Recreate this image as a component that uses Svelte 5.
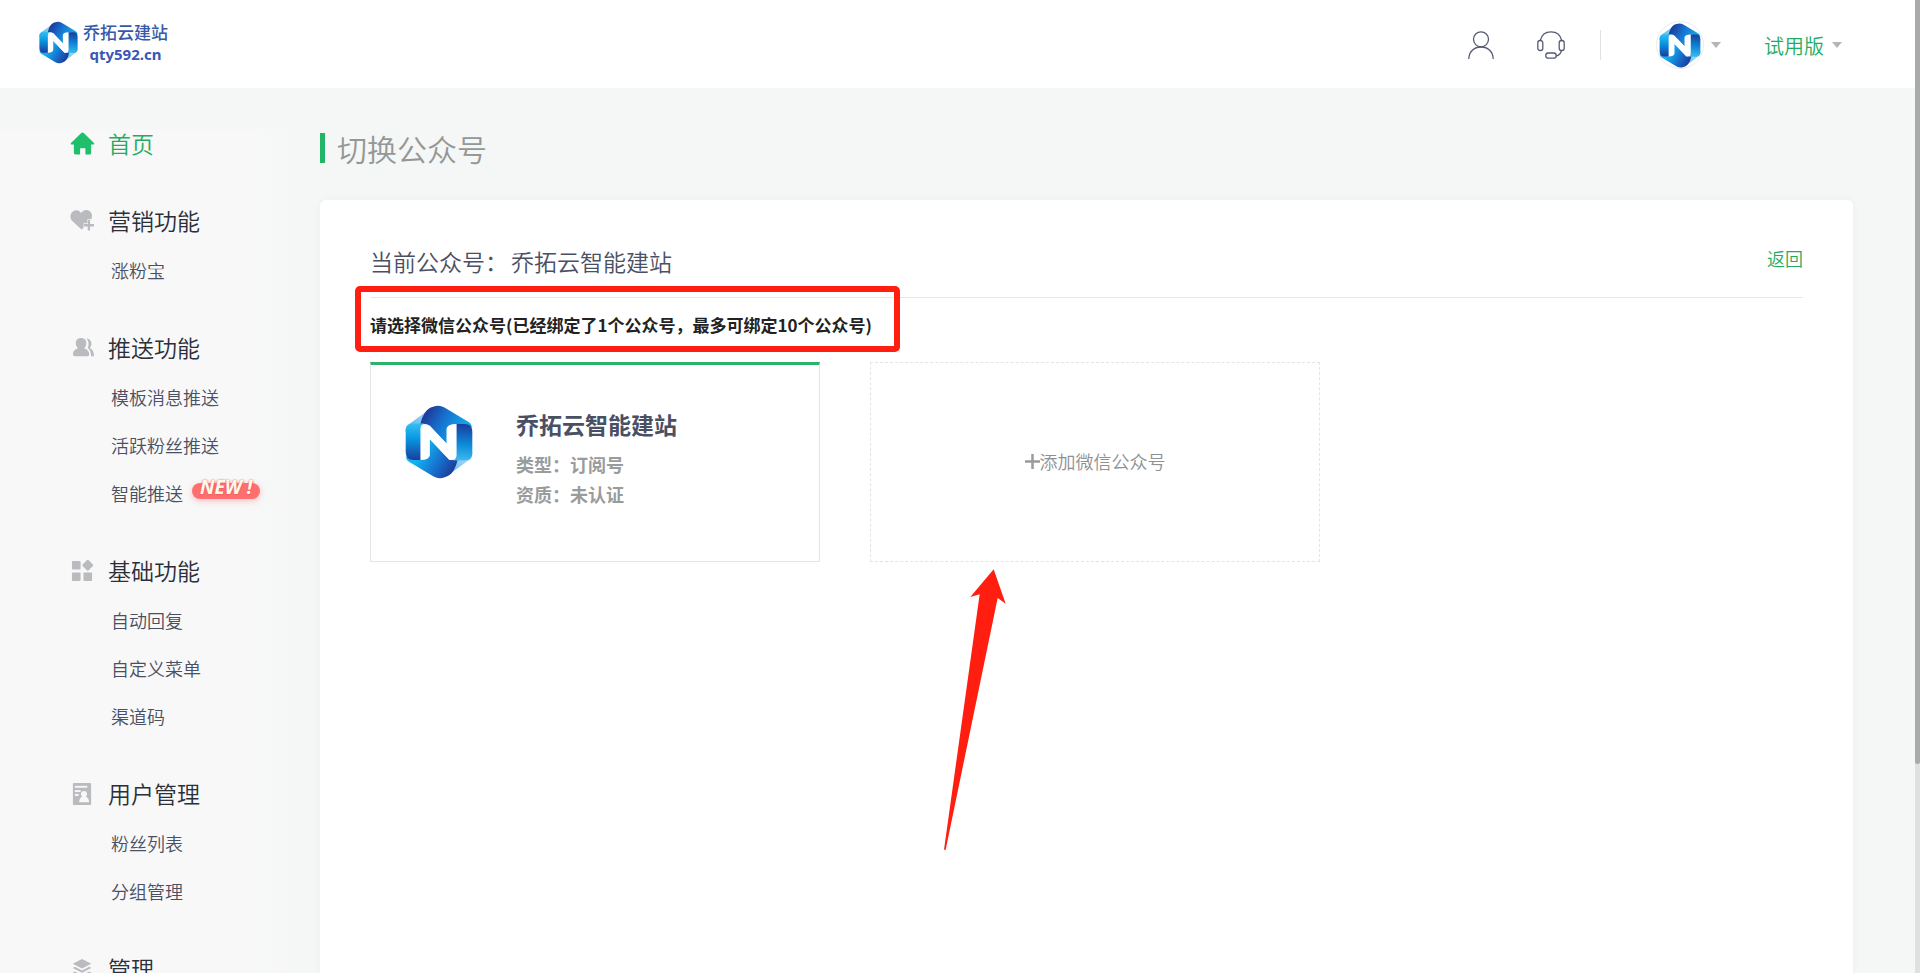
<script>
  const groups = [
    { title: '营销功能', icon: 'heart', items: [{ label: '涨粉宝' }] },
    {
      title: '推送功能',
      icon: 'people',
      items: [{ label: '模板消息推送' }, { label: '活跃粉丝推送' }, { label: '智能推送', isNew: true }]
    },
    {
      title: '基础功能',
      icon: 'blocks',
      items: [{ label: '自动回复' }, { label: '自定义菜单' }, { label: '渠道码' }]
    },
    { title: '用户管理', icon: 'profile', items: [{ label: '粉丝列表' }, { label: '分组管理' }] },
    { title: '管理', icon: 'layers', items: [] }
  ];
</script>

{#snippet mark(cls)}
  <svg class={cls} viewBox="30 30 207 224" aria-hidden="true"><use href="#brand-mark" /></svg>
{/snippet}

{#snippet caret()}
  <svg class="caret" viewBox="0 0 10 6" aria-hidden="true"><path d="M0 0h10L5 6z" fill="#b3b5b7" /></svg>
{/snippet}

<!-- Brand mark shared by the header, the avatar and the account card -->
<svg class="defs" aria-hidden="true">
  <defs>
    <linearGradient id="g-top" gradientUnits="userSpaceOnUse" x1="100" y1="50" x2="200" y2="110">
      <stop offset="0" stop-color="#1d3f9f" /><stop offset=".45" stop-color="#1672cf" /><stop offset="1" stop-color="#12a5e8" />
    </linearGradient>
    <linearGradient id="g-left" gradientUnits="userSpaceOnUse" x1="60" y1="85" x2="60" y2="198">
      <stop offset="0" stop-color="#35c0f3" /><stop offset=".4" stop-color="#0899e2" /><stop offset="1" stop-color="#1b3c9c" />
    </linearGradient>
    <linearGradient id="g-right" gradientUnits="userSpaceOnUse" x1="215" y1="88" x2="205" y2="205">
      <stop offset="0" stop-color="#1b3c9c" /><stop offset=".5" stop-color="#0b87d6" /><stop offset="1" stop-color="#45c0f2" />
    </linearGradient>
    <linearGradient id="g-bottom" gradientUnits="userSpaceOnUse" x1="75" y1="180" x2="170" y2="235">
      <stop offset="0" stop-color="#12b3ef" /><stop offset=".55" stop-color="#1672cf" /><stop offset="1" stop-color="#1d3f9f" />
    </linearGradient>
    <linearGradient id="g-fold" gradientUnits="userSpaceOnUse" x1="40" y1="90" x2="105" y2="40">
      <stop offset="0" stop-color="#5cb9ec" /><stop offset="1" stop-color="#a9d8f6" />
    </linearGradient>
    <g id="brand-mark">
      <path fill="url(#g-fold)" d="M32 106q0-12 10-18l66-48-20 58-56 14z" />
      <path fill="url(#g-fold)" d="M235 178q0 13-10 19l-66 48 20-58 56-14z" />
      <path fill="url(#g-top)" d="M76 92C82 62 94 40 116 35q17-7 34 2l75 45q8 5 10 17L190 87l-33 12v48L105 92z" />
      <path fill="url(#g-bottom)" d="M191 192c-6 30-18 52-40 57q-17 7-34-2l-75-45q-8-5-10-17l45 12 28-12v-52l60 64z" />
      <path fill="url(#g-left)" d="M32 108q0-22 22-22h35l-8 111H56q-24 0-24-25z" />
      <path fill="url(#g-right)" d="M235 176q0 22-22 22h-36l5-111h29q24 0 24 25z" />
      <path fill="#fff" d="M77 197V103q0-16 14-16 8 0 14 6l52 54v-44q0-16 30-16v94q0 16-14 16-6 0-11-5l-57-59v48q0 16-28 16z" />
    </g>
  </defs>
</svg>

<header class="topbar">
  <a class="brand" href="#home">
    {@render mark('brand-mark')}
    <span class="brand-text"><b>乔拓云建站</b><b class="domain">qty592.cn</b></span>
  </a>
  <div class="tools">
    <button class="tool" aria-label="个人中心">
      <svg width="26" height="28" viewBox="0 0 26 28" fill="none" stroke="#575a72" stroke-width="1.3">
        <circle cx="13" cy="8.3" r="7.5" /><path d="M.8 28C1 20.500 6 16 13 16s12 4.500 12.200 12" />
      </svg>
    </button>
    <button class="tool" aria-label="客服">
      <svg width="28" height="28" viewBox="0 0 28 28" fill="none" stroke="#575a72" stroke-width="1.300">
        <rect x=".8" y="9.500" width="5" height="10" rx="2.300" />
        <rect x="22.200" y="9.500" width="5" height="10" rx="2.300" />
        <path d="M3.300 9.500C4.500 4 8.500.8 14 .8s9.500 3.200 10.700 8.700M24.500 19.500c-.8 3.300-2.600 5-5.500 5.500" />
        <rect x="8.800" y="22" width="10.400" height="5.200" rx="2.500" />
      </svg>
    </button>
    <span class="separator"></span>
    <button class="account" aria-label="账号">
      <span class="avatar">{@render mark('avatar-mark')}</span>
      {@render caret()}
    </button>
    <button class="plan">试用版{@render caret()}</button>
  </div>
</header>

<div class="page">
  <nav class="sidebar">
    <a class="home" href="#home">
      <svg class="icon" viewBox="0 0 26 24"><path fill="#1fbf6b" d="M13 .5q.7 0 1.300.5L25 11.500q1 1.200-.4 1.500H22v9q0 1.500-1.500 1.500H16V17h-5.500v6.500h-5Q4 23.500 4 22v-9H1.400Q0 12.700 1 11.500L11.700 1q.6-.5 1.300-.5z" /></svg>
      首页
    </a>
    {#each groups as group}
      <section class="group">
        <h2>
          <svg class="icon" viewBox="0 0 26 24" fill="#b9bbbe">
            {#if group.icon === 'heart'}
              <path d="M11.500 4.200C9.500.8 5.500.8 3 2.600-.2 5-.3 9.500 2 12.200l10 9.300 2-1.700v-5h4v-4h4.200c1.600-3.600.6-7.200-2.200-9-3-1.600-6.500-.8-8.500 2.400z" />
              <path d="M18.500 11.500h2.400v4.200H25v2.500h-4.100v4.300h-2.400v-4.300h-4.200v-2.500h4.200z" />
            {:else if group.icon === 'people'}
              <path d="M17 2.500c4 .3 5.600 3 5.300 6-.1 1.500-.8 2.800-1.700 4 3.200 1.500 4.400 4.500 4.400 8.500h-3c-.1-4-1.200-7-3.600-8.500 1.400-3 1.400-7-1.400-10z" />
              <path d="M11.500 2C15 2 17 4.300 17 7.400c0 2.300-1 4.100-2.300 5.400 3.500 1.200 5.300 3.300 5.300 6.500 0 1-.7 1.700-1.700 1.700H5.200c-1.300 0-2.200-.8-2.200-1.900 0-3 2-5.200 5.300-6.300C7 11.500 6 9.700 6 7.400 6 4.300 8 2 11.500 2z" />
            {:else if group.icon === 'blocks'}
              <rect x="2" y="2" width="9" height="9" rx="1" /><rect x="2" y="14" width="9" height="9" rx="1" />
              <rect x="14" y="14" width="9" height="9" rx="1" />
              <rect x="14.200" y="2.200" width="8.600" height="8.600" rx="1" transform="rotate(45 18.500 6.500)" />
            {:else if group.icon === 'profile'}
              <rect x="3" y="1" width="19" height="23" rx="1" />
              <g fill="#f8f8f8"><rect x="5" y="4" width="13" height="2" /><rect x="5" y="8.500" width="6" height="2" /><rect x="5" y="12.500" width="4" height="2" />
                <path d="M14.500 9.500c2 0 3.200 1.300 3.200 3 0 1.200-.5 2.200-1.200 2.900 2 .7 3.200 2.200 3.500 5.600H9.500c.3-3.400 1.300-4.900 3.200-5.600-.8-.7-1.300-1.700-1.300-2.900 0-1.700 1.100-3 3.100-3z" /></g>
            {:else}
              <path d="M12.500 2l9.700 5-9.700 5-9.700-5z" /><path d="M5 10.200l7.500 3.800 7.500-3.800 2.200 1.300-9.700 5-9.700-5z" /><path d="M5 15.200l7.500 3.800 7.500-3.800 2.200 1.300-9.700 5-9.700-5z" />
            {/if}
          </svg>
          {group.title}
        </h2>
        {#each group.items as item}
          <a class="item" href="#menu">{item.label}{#if item.isNew}<em class="new">NEW !</em>{/if}</a>
        {/each}
      </section>
    {/each}
  </nav>

  <main>
    <h1>切换公众号</h1>
    <section class="panel">
      <div class="current">
        <p>当前公众号：<span>乔拓云智能建站</span></p>
        <a href="#back">返回</a>
      </div>
      <p class="hint">请选择微信公众号(已经绑定了1个公众号，最多可绑定10个公众号)</p>
      <div class="accounts">
        <article class="bound">
          {@render mark('bound-mark')}
          <div>
            <h3>乔拓云智能建站</h3>
            <p>类型：订阅号</p>
            <p>资质：未认证</p>
          </div>
        </article>
        <div class="slot">
          <button class="add">
            <svg width="15" height="15" viewBox="0 0 15 15" aria-hidden="true"><path d="M7.500 0v15M0 7.500h15" stroke="#999b9d" stroke-width="2.500" /></svg>添加微信公众号
          </button>
          <svg class="arrow" viewBox="125 50 195 855" aria-hidden="true"><path fill="#ff1e10" d="M280 57l36 103-24-17L136 898h-5L238 132l-28 8z" /></svg>
        </div>
      </div>
    </section>
  </main>
</div>

<div class="scrollbar" aria-hidden="true"><span></span></div>

<style>
  :global(html), :global(body) { height: 100%; }
  :global(body) {
    margin: 0;
    overflow: hidden;
    background: #f4f7f6;
    font-family: 'Noto Sans CJK SC', sans-serif;
    font-weight: 350;
    color: #2b2f3a;
  }
  h1, h2, h3, p { margin: 0; font-weight: inherit; }
  a { color: inherit; text-decoration: none; }
  button { padding: 0; border: 0; background: none; font: inherit; color: inherit; cursor: pointer; }
  svg { display: block; flex: none; }
  .defs { position: absolute; width: 0; height: 0; }

  .topbar {
    display: flex;
    justify-content: space-between;
    height: 88px;
    padding: 0 78px 0 39px;
    background: #fff;
  }
  .brand { display: flex; gap: 5px; align-self: flex-start; padding-top: 21px; }
  .brand :global(.brand-mark) { width: 39px; height: 43px; }
  .brand-text { display: flex; flex-direction: column; align-items: center; color: #3558a8; font-size: 17px; line-height: 22px; }
  .brand-text b { font-weight: 500; }
  .brand-text .domain { font: 700 15px/22px 'Noto Sans', sans-serif; color: #3a57b5; }
  .tools { display: flex; align-items: center; padding-top: 2px; }
  .tool + .tool { margin-left: 43px; }
  .separator { width: 1px; height: 30px; margin: 0 55px 0 35px; background: #e2e2e4; }
  .account { display: flex; align-items: center; gap: 7px; }
  .avatar {
    display: flex;
    align-items: center;
    justify-content: center;
    box-sizing: border-box;
    width: 48px;
    height: 48px;
    border: 1px solid #ececee;
    border-radius: 50%;
  }
  .avatar :global(.avatar-mark) { width: 42px; height: 45px; }
  .caret { width: 10px; height: 6px; }
  .plan { display: flex; align-items: center; gap: 8px; margin-left: 43px; font-size: 20px; color: #22ac5e; }

  .page { display: flex; height: calc(100vh - 88px); overflow: hidden; }
  .sidebar {
    flex: none;
    box-sizing: border-box;
    width: 300px;
    margin-top: 41px;
    padding-left: 70px;
    background: linear-gradient(to right, #f8f8f8 80%, #f5f7f6);
  }
  .home, h2 { display: flex; align-items: center; gap: 13px; font-size: 23px; }
  .icon { width: 25px; height: 23px; }
  .home { height: 28px; margin-bottom: 39px; color: #22ac5e; }
  .group { margin-bottom: 29px; }
  h2 { box-sizing: border-box; height: 50px; padding-bottom: 2px; }
  .item { display: flex; align-items: center; height: 48px; padding-left: 41px; font-size: 18px; color: #4a5064; }
  .new {
    height: 16px;
    margin: 0 0 4px 9px;
    padding: 0 8px;
    border-radius: 8px;
    background: #ff6f70;
    box-shadow: 0 2px 6px #ff6f7066;
    color: #fff9ec;
    font: italic 700 19px/8px 'Noto Sans', sans-serif;
    text-shadow: 0 0 2px #f2605f, 0 1px 2px #f2605f;
  }

  main { display: flex; flex: 1; flex-direction: column; min-width: 0; padding: 45px 67px 0 20px; }
  h1 { display: flex; align-items: center; height: 30px; padding-left: 12px; border-left: 5px solid #22b566; font-size: 30px; color: #949797; }
  .panel { flex: 1; margin-top: 37px; padding: 0 50px; border-radius: 6px 6px 0 0; background: #fff; box-shadow: 0 0 8px #0000000a; }
  .current { display: flex; align-items: center; justify-content: space-between; height: 97px; border-bottom: 1px solid #e6e6e8; }
  .current p { padding-top: 24px; font-size: 23px; color: #4a5064; }
  .current span { margin-left: 3px; }
  .current a { padding-top: 18px; font-size: 18px; color: #22ac5e; }
  .hint { position: relative; padding: 12px 0 22px; font-size: 17px; line-height: 30px; font-weight: 700; color: #222; }
  .hint::after {
    content: '';
    position: absolute;
    top: -12px;
    left: -15px;
    box-sizing: border-box;
    width: 545px;
    height: 66px;
    border: 6px solid #ff1e10;
    border-radius: 5px;
  }
  .accounts { display: flex; gap: 50px; }
  .bound, .slot { box-sizing: border-box; flex: 0 1 450px; height: 200px; }
  .bound { display: flex; gap: 43px; padding: 40px 34px; border: 1px solid #e4e4e6; border-top: 3px solid #2bb36b; }
  .bound :global(.bound-mark) { width: 68px; height: 74px; }
  .bound h3 { margin: 2px 0 8px; font-size: 23px; line-height: 34px; font-weight: 700; color: #4a5064; }
  .bound p { font-size: 18px; line-height: 30px; font-weight: 700; color: #999c9c; }
  .slot { position: relative; }
  .add {
    display: flex;
    align-items: center;
    justify-content: center;
    width: 100%;
    height: 100%;
    padding-bottom: 2px;
    border: 1px dashed #e4e4e6;
    font-size: 18px;
    color: #8d9194;
  }
  .arrow { position: absolute; top: 205px; left: 72px; width: 65px; height: 285px; }

  .scrollbar { position: fixed; inset: 0 0 0 auto; width: 5px; background: #e0e0e0; }
  .scrollbar span { display: block; height: 78.5%; border-radius: 0 0 2px 2px; background: #a9abaa; }
</style>
